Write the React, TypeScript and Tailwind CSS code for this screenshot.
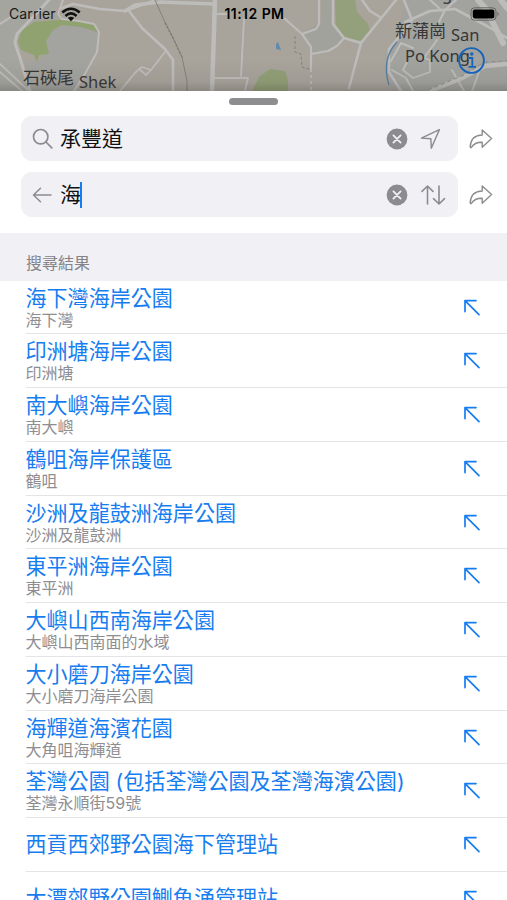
import type { ReactNode } from 'react';

type Place = {
  name: string;
  detail?: string;
};

const places: Place[] = [
  { name: '海下灣海岸公園', detail: '海下灣' },
  { name: '印洲塘海岸公園', detail: '印洲塘' },
  { name: '南大嶼海岸公園', detail: '南大嶼' },
  { name: '鶴咀海岸保護區', detail: '鶴咀' },
  { name: '沙洲及龍鼓洲海岸公園', detail: '沙洲及龍鼓洲' },
  { name: '東平洲海岸公園', detail: '東平洲' },
  { name: '大嶼山西南海岸公園', detail: '大嶼山西南面的水域' },
  { name: '大小磨刀海岸公園', detail: '大小磨刀海岸公園' },
  { name: '海輝道海濱花園', detail: '大角咀海輝道' },
  { name: '荃灣公園 (包括荃灣公園及荃灣海濱公園)', detail: '荃灣永順街59號' },
  { name: '西貢西郊野公園海下管理站' },
  { name: '大潭郊野公園鰂魚涌管理站' },
];

function MapView() {
  return (
    <svg className="absolute inset-0 h-full w-full" viewBox="0 0 507 91" preserveAspectRatio="none" fill="none">
      <defs>
        <linearGradient id="sheetShadow" x1="0" y1="0" x2="0" y2="1">
          <stop offset="0" stopColor="#000" stopOpacity="0" />
          <stop offset="0.7" stopColor="#000" stopOpacity="0.05" />
          <stop offset="1" stopColor="#000" stopOpacity="0.18" />
        </linearGradient>
      </defs>
      <rect width="507" height="91" fill="#a8a49c" />
      <path d="M0 0H65L35 22L16 40L24 91H0Z" fill="#a5a5a0" />
      <path d="M50 30L62 22L99 30L97 52L74 91H30L24 60L37 62L49 54L46 41Z" fill="#a3a39f" />
      <path d="M302 34L321 21V0H333V24L344 38L328 51L310 54Z" fill="#a2a29d" />
      <path d="M405 0H507V91H392L386 60L397 36Z" fill="#a2a29e" />
      {/* Parks */}
      <path d="M34 22L58 20L80 20L95 25L98 32L80 27L62 25L53 30L46 41L49 54L39 55L37 62L34 55L21 50L18 41L22 30Z" fill="#91a271" />
      <path d="M335 0H355L357 12L368 24L370 30L361 41L345 38L336 26Z" fill="#94a07c" />
      <path d="M252 91L259 77L270 69L285 71L288 80V91Z" fill="#92a078" />
      <path d="M276 44L278 42L281 50L276 49Z" fill="#5f8cad" />
      {/* Roads */}
      <g stroke="#bdbcba" strokeLinejoin="round" strokeLinecap="round">
        <path d="M49 0L30 20L17 34L15 43L20 58L30 91" strokeWidth="3" />
        <path d="M63 0L58 14L62 19L79 21L94 24L99 32L97 52L86 72L74 91" strokeWidth="2" />
        <path d="M62 8L73 4L100 9L125 11L153 1L155 0" strokeWidth="2.4" />
        <path d="M125 11L135 5L160 2L214 4" strokeWidth="3.4" />
        <path d="M129 11L142 28L165 49L173 60L173 91" strokeWidth="2.6" />
        <path d="M165 52L151 70L146 75L139 69L134 74L120 91M151 70L142 67L139 69" strokeWidth="1.8" />
        <path d="M215 0L212 91" strokeWidth="4.5" />
        <path d="M213 14H227M244 19L241 76M213 78H248L245 91" strokeWidth="1.8" />
        <path d="M0 24L11 17M0 64L29 91M0 72L22 91" strokeWidth="2" />
        <path d="M319 0V24L316 29L302 34L285 19M302 34L311 47V68" strokeWidth="2.2" />
        <path d="M311 54L328 51L337 46L344 38" strokeWidth="2.2" />
        <path d="M333 0V24L344 38L361 43M396 0L361 43L349 88" strokeWidth="2.6" />
        <path d="M362 0L370 11L380 17" strokeWidth="2.6" />
        <path d="M404 0L412 20L404 31L389 49L389 72L401 91M405 22L430 11L455 9L487 26L507 38" strokeWidth="2.6" />
        <path d="M430 0L440 9M456 0L445 10L438 24" strokeWidth="2.2" />
        <path d="M478 0L486 9L503 43M501 0L507 8" strokeWidth="6" />
        <path d="M430 91L462 78L485 66L507 64" strokeWidth="4.5" />
        <path d="M407 62L403 70L413 78L430 72V60L424 58" strokeWidth="1.8" />
        <path d="M401 43L391 61M401 43L413 48M424 58L437 40M392 70L406 78L413 91M452 70L464 91M472 91L479 72" strokeWidth="2" />
      </g>
      <path d="M311 69V91" stroke="#b8b7b4" strokeWidth="2" strokeDasharray="3 3" />
      {/* Railway and boundaries */}
      <path d="M155 0L163 18L172 36L182 57L187 81L187 91" stroke="#85817b" />
      <path d="M165 23L172 36L182 57" stroke="#7e7a74" strokeWidth="1.4" strokeDasharray="2 2" />
      <path d="M295 36V52L301 54L302 67L309 69" stroke="#85827d" strokeDasharray="3 2" />
      <path d="M428 90L464 75L485 62L507 61" stroke="#8c8c90" strokeDasharray="4 3" />
      <path d="M397 42Q381 59 389 85" stroke="#557fa2" strokeWidth="1.3" />
      <rect y="60" width="507" height="31" fill="url(#sheetShadow)" />
    </svg>
  );
}

function SearchIcon() {
  return (
    <svg width="22" height="22" viewBox="0 0 22 22" fill="none" stroke="#8b8b90" strokeWidth="1.7" strokeLinecap="round">
      <circle cx="8.7" cy="8.7" r="7.2" />
      <path d="M14 14L19.8 19.8" />
    </svg>
  );
}

function BackIcon() {
  return (
    <svg width="22" height="22" viewBox="0 0 22 22" fill="none" stroke="#8b8b90" strokeWidth="1.5" strokeLinecap="round" strokeLinejoin="round">
      <path d="M19 11H1.5M8.5 4.2L1.5 11L8.5 17.8" />
    </svg>
  );
}

function ClearIcon() {
  return (
    <svg width="22" height="22" viewBox="0 0 22 22" fill="none">
      <circle cx="11" cy="11" r="10.4" fill="#8b8b90" />
      <path d="M7.4 7.4L14.6 14.6M14.6 7.4L7.4 14.6" stroke="#f0f0f5" strokeWidth="1.8" strokeLinecap="round" />
    </svg>
  );
}

function LocationIcon() {
  return (
    <svg width="26" height="26" viewBox="0 0 26 26" fill="none" stroke="#8b8b90" strokeWidth="1.4" strokeLinejoin="round">
      <path d="M19.4 3.6L1.4 12.1L10.9 12.7L11.3 22.2Z" />
    </svg>
  );
}

function SwapIcon() {
  return (
    <svg width="26" height="26" viewBox="0 0 26 26" fill="none" stroke="#8b8b90" strokeWidth="1.6" strokeLinecap="round" strokeLinejoin="round">
      <path d="M7.5 22V4M2 9.4L7.5 4L13 9.4M19 4V22M13.5 16.6L19 22L24.5 16.6" />
    </svg>
  );
}

function ShareIcon() {
  return (
    <svg width="24" height="22" viewBox="0 0 24 22" fill="none" stroke="#8b8b90" strokeWidth="1.4" strokeLinejoin="round">
      <path d="M13.2 2L22.6 10.6L13.2 19.2V14.3C7.5 14.1 4.6 16 2.4 19.4C1.5 20 1.2 19.5 1.2 18.8C1.6 11.5 5.5 7.2 13.2 7Z" />
    </svg>
  );
}

function InsertIcon() {
  return (
    <svg width="18" height="18" viewBox="0 0 18 18" fill="none" stroke="#167df0" strokeWidth="1.7" strokeLinecap="round" strokeLinejoin="round">
      <path d="M13 1.6H2V12.6M2 1.6L16 15.6" />
    </svg>
  );
}

function StatusBar() {
  return (
    <div className="relative grid h-7 grid-cols-3 items-center pl-[9px] pr-[7px] text-black">
      <div className="flex items-center gap-[5px]">
        <span className="text-[14px] leading-none tracking-[0.1px] text-[#1a1a1a]">Carrier</span>
        <svg width="20" height="15" viewBox="0 0 20 15" fill="none" stroke="#111" strokeWidth="2.6">
          <path d="M1.3 5.5Q10 -2 18.7 5.5M4.4 8.9Q10 4 15.6 8.9" />
          <path d="M6.8 11L10 14.2L13.2 11Q10 8.5 6.8 11Z" fill="#111" stroke="none" />
        </svg>
      </div>
      <span className="text-center text-[14px] font-semibold leading-none tracking-[0.45px]">11:12 PM</span>
      <svg className="-mt-px justify-self-end" width="30" height="14" viewBox="0 0 30 14" fill="none">
        <rect x="1" y="0.8" width="25" height="12.4" rx="3.5" stroke="#666461" strokeWidth="1" />
        <rect x="2.8" y="2.5" width="21.5" height="9" rx="2" fill="#000" />
        <path d="M27.5 5Q30 7 27.5 9Z" fill="#666461" />
      </svg>
    </div>
  );
}

type FieldProps = {
  icon: ReactNode;
  action: ReactNode;
  value: string;
  focused?: boolean;
};

function SearchField({ icon, action, value, focused }: FieldProps) {
  return (
    <div className="flex items-center pl-[21px] pr-[14px]">
      <div className="flex h-[45px] w-[437px] items-center rounded-[11px] bg-[#f0f0f5] pl-[11px] pr-[12px]">
        {icon}
        <div className="ml-[6px] flex flex-1 items-center">
          <span className="text-[21px] leading-[30px] text-[#111]">{value}</span>
          {focused && <span className="-ml-px h-[26px] w-[2px] bg-[#167df0]" />}
        </div>
        <ClearIcon />
        <span className="ml-[12px]">{action}</span>
      </div>
      <span className="ml-auto">
        <ShareIcon />
      </span>
    </div>
  );
}

function PlaceRow({ place }: { place: Place }) {
  return (
    <li className="ml-[26px] flex h-[53.75px] shrink-0 items-center border-b border-[#e4e4e6] pr-[26px] pt-[1.5px]">
      <div className="-ml-[0.5px] flex-1 whitespace-nowrap">
        <div className="text-[21.05px] leading-[24px] text-[#167df0]">{place.name}</div>
        {place.detail && <div className="text-[16px] leading-[18px] text-[#8e8e92]">{place.detail}</div>}
      </div>
      <InsertIcon />
    </li>
  );
}

export default function App() {
  return (
    <main className="flex h-[900px] w-[507px] flex-col overflow-hidden bg-white font-[Inter,'Noto_Sans_CJK_TC',sans-serif]">
      <div className="relative h-[91px] shrink-0 overflow-hidden">
        <MapView />
        <StatusBar />
        <div className="absolute left-[23px] top-[68px] flex whitespace-nowrap font-['Noto_Sans','Noto_Sans_CJK_TC',sans-serif] text-[17px] leading-[20px] text-[#363636]">
          <span>石硤尾</span>
          <span className="ml-[5px] mt-[4px] text-[16.5px] leading-[19px]">Shek</span>
        </div>
        <div className="absolute left-[395px] top-[21px] whitespace-nowrap font-['Noto_Sans','Noto_Sans_CJK_TC',sans-serif] text-[17px] leading-[20px] text-[#363636]">
          <div className="flex">
            <span>新蒲崗</span>
            <span className="ml-[5px] mt-[4px] text-[16.5px] leading-[20px]">San</span>
          </div>
          <div className="ml-[10px] text-[16.5px] leading-[22px]">Po Kong</div>
        </div>
        <span className="absolute -top-[16px] left-[442px] font-['Noto_Sans',sans-serif] text-[16.5px] leading-[20px] text-[#363636]">g</span>
        <svg className="absolute left-[457px] top-[46px]" width="29" height="29" viewBox="0 0 29 29" fill="none" stroke="#1763b8">
          <circle cx="14.5" cy="14.5" r="12.4" strokeWidth="1.9" />
          <path d="M12 12H15.3V20.5M11.5 20.8H19" strokeWidth="1.8" />
          <circle cx="14.8" cy="8" r="1.7" fill="#1763b8" stroke="none" />
        </svg>
      </div>

      <section className="flex flex-1 flex-col">
        <div className="mx-auto mt-[7px] h-[7px] w-[49px] shrink-0 rounded-full bg-[#8e8e91]" />
        <div className="mb-4 mt-[11px] flex flex-col gap-[11px]">
          <SearchField icon={<SearchIcon />} action={<LocationIcon />} value="承豐道" />
          <SearchField icon={<BackIcon />} action={<SwapIcon />} value="海" focused />
        </div>
        <h2 className="h-[48px] shrink-0 bg-[#f0f0f5] pl-[26px] pt-[20px] text-[16px] leading-[20px] text-[#838388]">搜尋結果</h2>
        <ul className="-mt-[0.5px] flex flex-col">
          {places.map((place) => (
            <PlaceRow key={place.name} place={place} />
          ))}
        </ul>
      </section>
    </main>
  );
}
